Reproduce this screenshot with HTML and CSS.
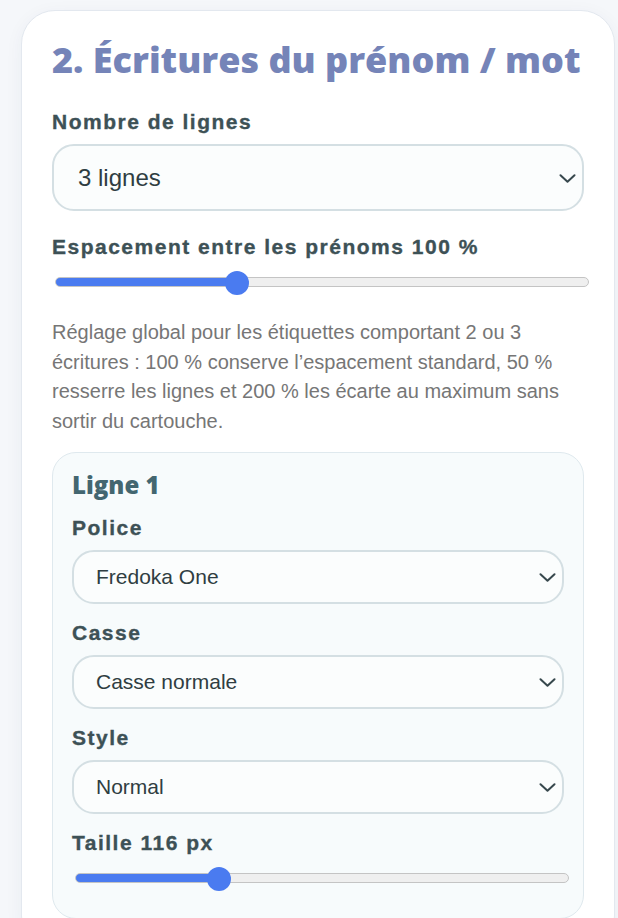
FILE: index.html
```html
<!DOCTYPE html>
<html lang="fr">
<head>
    <meta charset="UTF-8">
    <meta name="viewport" content="width=device-width, initial-scale=1.0">
    <title>Écritures du prénom</title>
    <link rel="stylesheet" href="styles.css">
</head>
<body>
    <main class="panel">
        <h2 class="panel-title">2. Écritures du prénom / mot</h2>

        <div class="field">
            <label class="field-label" for="line-count">Nombre de lignes</label>
            <div class="select-wrap">
                <select id="line-count" class="select select--lg">
                    <option>1 ligne</option>
                    <option>2 lignes</option>
                    <option selected>3 lignes</option>
                </select>
                <svg class="chevron" viewBox="0 0 17 9"><path d="M1.5 1.2 8.5 7.8 15.5 1.2"/></svg>
            </div>
        </div>

        <div class="field">
            <label class="field-label field-label--range" for="spacing">Espacement entre les prénoms 100 %</label>
            <input id="spacing" class="range" type="range" min="50" max="200" value="100" style="--f: 0.333">
        </div>

        <p class="hint">Réglage global pour les étiquettes comportant 2 ou 3 écritures : 100 % conserve l’espacement standard, 50 % resserre les lignes et 200 % les écarte au maximum sans sortir du cartouche.</p>

        <section class="line-card">
            <h3 class="line-title">Ligne 1</h3>

            <div class="field field--sm">
                <label class="field-label" for="font-1">Police</label>
                <div class="select-wrap">
                    <select id="font-1" class="select">
                        <option selected>Fredoka One</option>
                        <option>Andika</option>
                        <option>Cursive école</option>
                    </select>
                    <svg class="chevron" viewBox="0 0 17 9"><path d="M1.5 1.2 8.5 7.8 15.5 1.2"/></svg>
                </div>
            </div>

            <div class="field field--sm">
                <label class="field-label" for="case-1">Casse</label>
                <div class="select-wrap">
                    <select id="case-1" class="select">
                        <option selected>Casse normale</option>
                        <option>MAJUSCULES</option>
                        <option>minuscules</option>
                    </select>
                    <svg class="chevron" viewBox="0 0 17 9"><path d="M1.5 1.2 8.5 7.8 15.5 1.2"/></svg>
                </div>
            </div>

            <div class="field field--sm">
                <label class="field-label" for="style-1">Style</label>
                <div class="select-wrap">
                    <select id="style-1" class="select">
                        <option selected>Normal</option>
                        <option>Gras</option>
                        <option>Italique</option>
                    </select>
                    <svg class="chevron" viewBox="0 0 17 9"><path d="M1.5 1.2 8.5 7.8 15.5 1.2"/></svg>
                </div>
            </div>

            <div class="field field--sm field--last">
                <label class="field-label field-label--range" for="size-1">Taille 116 px</label>
                <input id="size-1" class="range" type="range" min="60" max="260" value="116" style="--f: 0.284">
            </div>
        </section>
    </main>
</body>
</html>
```

FILE: styles.css
```css
:root {
    --page-bg: #f5f7fa;
    --title-color: #7584b8;
    --label-color: #3d5156;
    --line-title: #436670;
    --hint-color: #767676;
    --select-border: #d4dfe3;
    --accent: #4a7bf0;
}

body {
    margin: 0;
    padding: 10px 0 0 21px;
    background-color: var(--page-bg);
    font-family: "Liberation Sans", Arial, sans-serif;
}

.panel {
    width: 532px;
    padding: 27px 30px 30px;
    background-color: #ffffff;
    border: 1px solid #e3e8ef;
    border-radius: 34px;
    box-shadow: 0 4px 18px rgba(40, 60, 100, 0.05);
}

.panel-title {
    margin: 0 0 29px;
    font-family: "Open Sans", sans-serif;
    font-weight: 800;
    font-size: 36px;
    line-height: 1.2;
    white-space: nowrap;
    color: var(--title-color);
}

.field {
    margin-bottom: 24px;
}

.field-label {
    display: block;
    margin-bottom: 10px;
    font-size: 21px;
    line-height: 24px;
    font-weight: 700;
    letter-spacing: 1.5px;
    -webkit-text-stroke: 0.35px var(--label-color);
    color: var(--label-color);
}

.field-label--range {
    margin-bottom: 11px;
}

.select-wrap {
    position: relative;
}

.select {
    -webkit-appearance: none;
    appearance: none;
    display: block;
    width: 100%;
    height: 54px;
    padding: 0 40px 0 22px;
    font-family: "Liberation Sans", Arial, sans-serif;
    font-size: 21px;
    color: #2f3d42;
    background-color: #fbfdfd;
    border: 2px solid var(--select-border);
    border-radius: 22px;
    outline: none;
}

.select--lg {
    height: 67px;
    padding-left: 24px;
    font-size: 24px;
}

.chevron {
    position: absolute;
    right: 8px;
    top: 50%;
    width: 17px;
    height: 9px;
    margin-top: -4px;
    fill: none;
    stroke: #37484d;
    stroke-width: 2;
    stroke-linecap: round;
    stroke-linejoin: round;
    pointer-events: none;
}

.range {
    -webkit-appearance: none;
    appearance: none;
    display: block;
    width: calc(100% + 2px);
    height: 24px;
    margin: 0 0 0 3px;
    background: transparent;
}

.range::-webkit-slider-runnable-track {
    height: 10px;
    border: 1px solid #c4c4c4;
    border-radius: 6px;
    background: linear-gradient(90deg, var(--accent) 0 calc(12px + (100% - 24px) * var(--f)), #efefef 0);
}

.range::-webkit-slider-thumb {
    -webkit-appearance: none;
    appearance: none;
    width: 24px;
    height: 24px;
    margin-top: -7px;
    border-radius: 50%;
    background: var(--accent);
    border: none;
}

.hint {
    margin: 0 0 16px;
    font-size: 20px;
    line-height: 29.5px;
    color: var(--hint-color);
}

.field + .hint {
    margin-top: 1px;
}

.line-card {
    padding: 18px 19px 28px;
    background-color: #f7fbfc;
    border: 1px solid #dfe9ee;
    border-radius: 24px;
}

.line-title {
    margin: 0 0 16px;
    font-family: "Open Sans", sans-serif;
    font-weight: 800;
    font-size: 24px;
    line-height: 1.2;
    color: var(--line-title);
}

.field--sm {
    margin-bottom: 17px;
}

.field--last {
    margin-bottom: 0;
}
```
